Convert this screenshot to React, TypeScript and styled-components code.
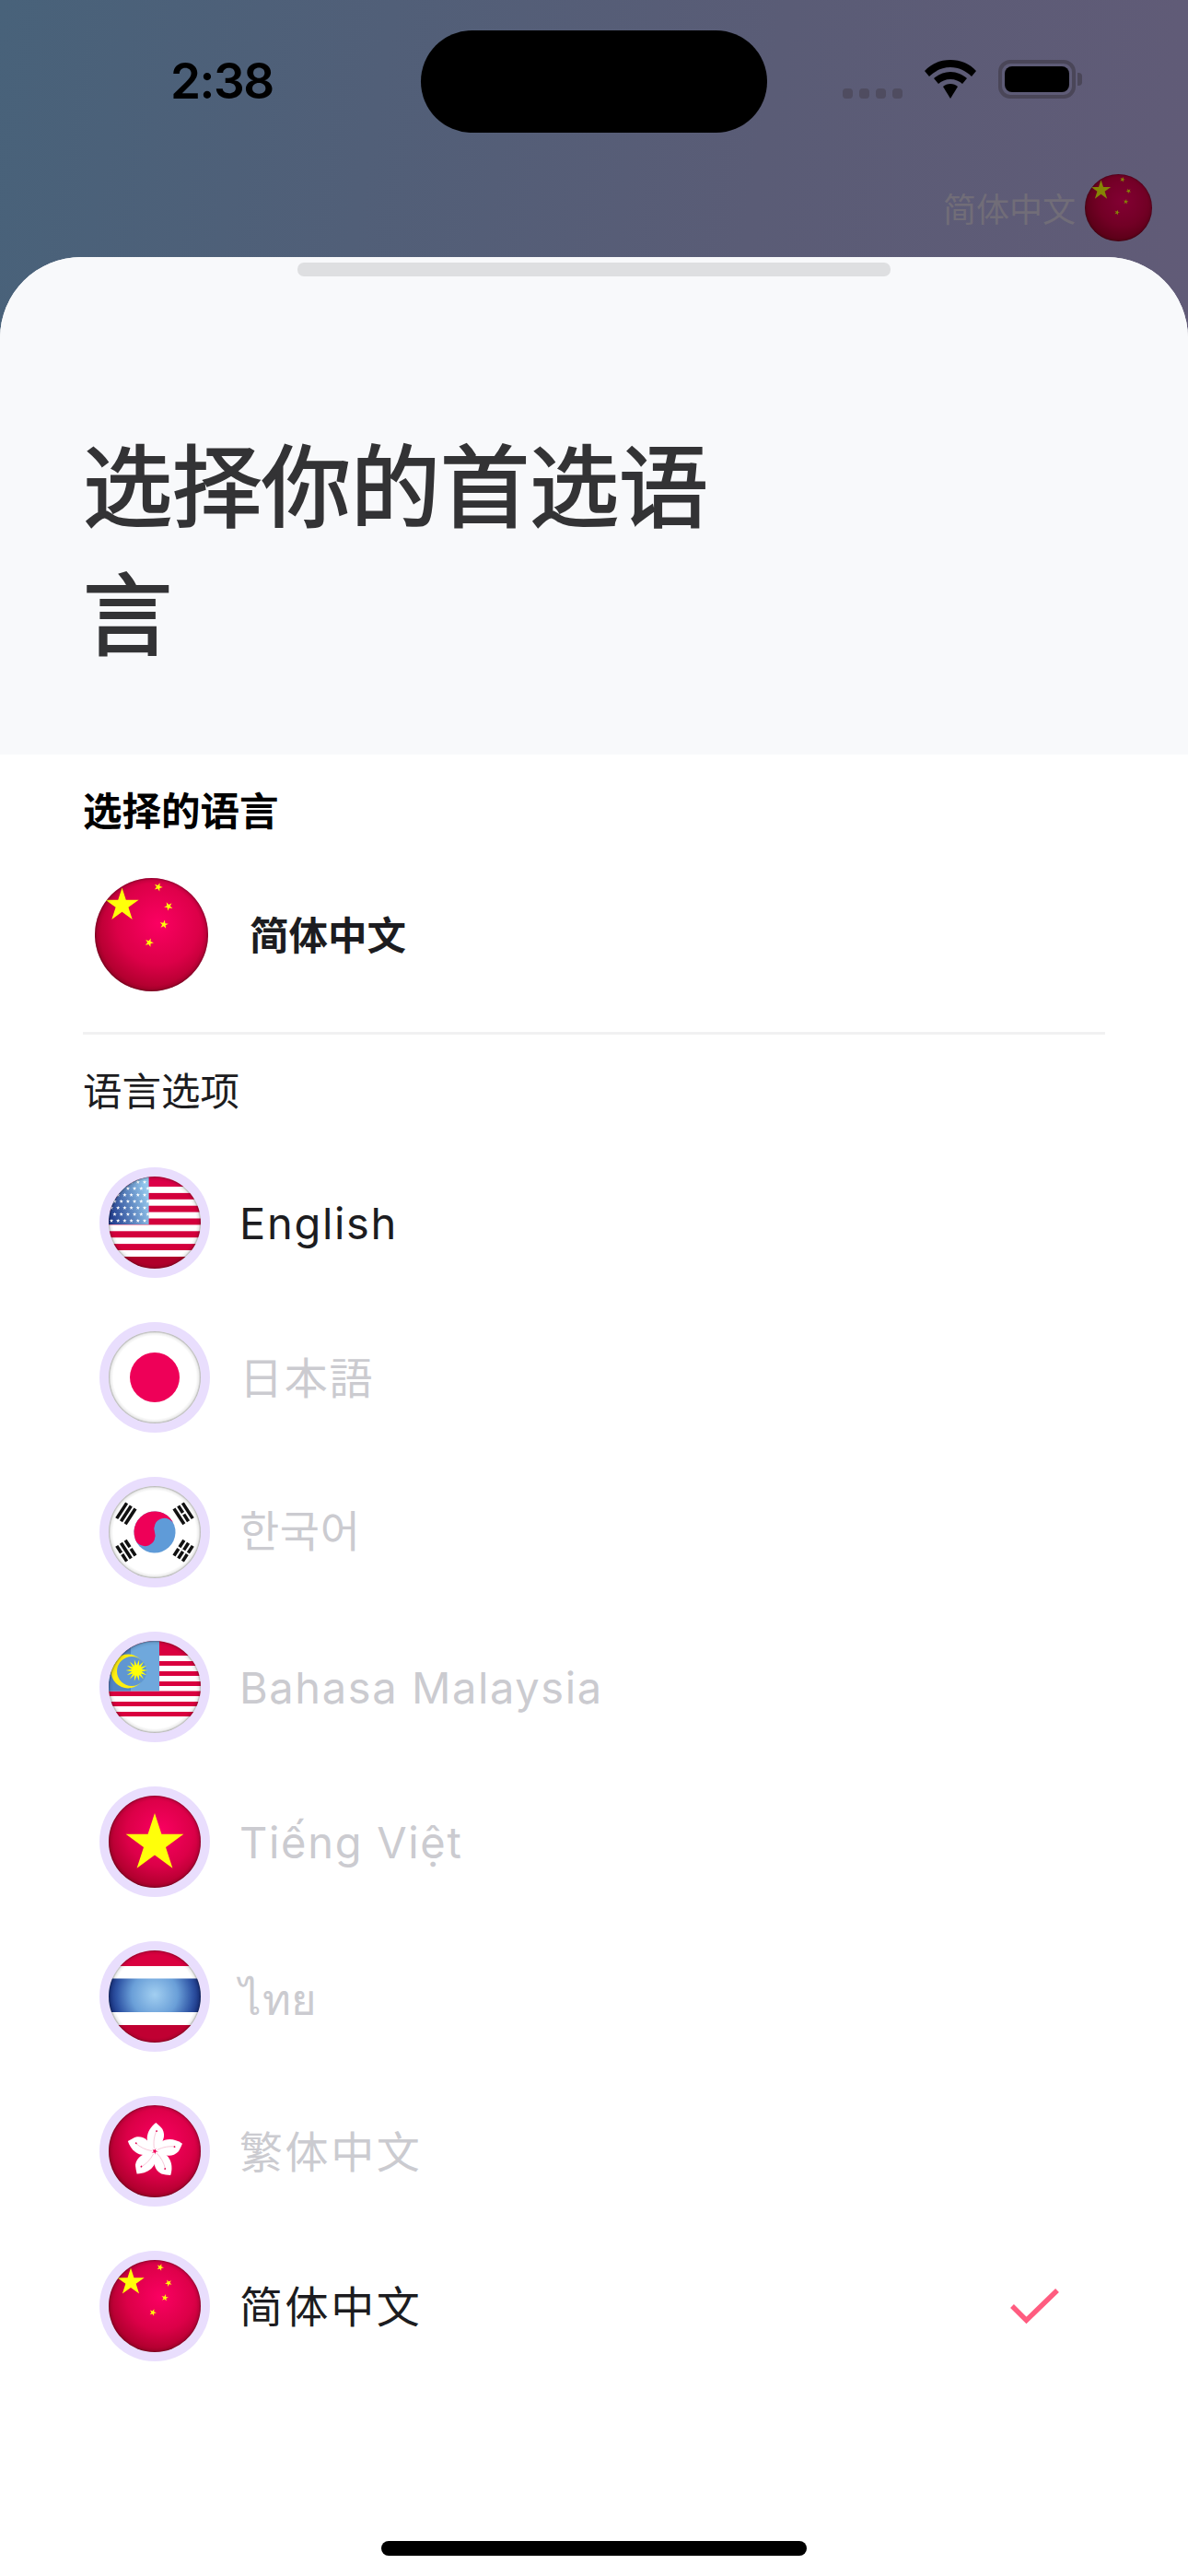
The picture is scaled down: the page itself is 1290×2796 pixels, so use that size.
import { useId, type ReactNode } from 'react'
import styled, { createGlobalStyle } from 'styled-components'

const GlobalStyle = createGlobalStyle`
  html, body {
    margin: 0;
    padding: 0;
    background: #fff;
  }
  * {
    box-sizing: border-box;
  }
`

const CJK = `"Noto Sans CJK SC", "Noto Sans", sans-serif`

const Page = styled.div`
  width: 1290px;
  height: 2796px;
  overflow: hidden;
  display: flex;
  flex-direction: column;
  background: linear-gradient(100deg, #48627a 0%, #5a5c76 48%, #675a78 100%);
  font-family: "Inter", ${CJK};
`

const StatusBar = styled.div`
  position: relative;
  height: 150px;
  display: flex;
  align-items: flex-start;
  padding: 65px 122px 0 185px;
`

const Time = styled.div`
  font-family: "Inter", sans-serif;
  font-size: 53px;
  line-height: 46px;
  font-weight: 600;
  letter-spacing: -1.5px;
  color: #000;
`

const Island = styled.div`
  position: absolute;
  left: 457px;
  top: 33px;
  width: 376px;
  height: 111px;
  border-radius: 56px;
  background: #000;
`

const StatusIcons = styled.div`
  margin-left: auto;
  height: 42px;
  display: flex;
  align-items: flex-end;
`

const SignalDots = styled.div`
  display: flex;
  gap: 7px;
  margin-right: 23px;
`

const SignalDot = styled.span`
  width: 11px;
  height: 11px;
  border-radius: 4px;
  background: #4f4c60;
`

const Battery = styled.div`
  width: 84px;
  height: 42px;
  margin-left: 23px;
  border: 4px solid #4a4658;
  border-radius: 13px;
  padding: 3px 3px;
  position: relative;
`

const BatteryFill = styled.div`
  width: 100%;
  height: 100%;
  background: #000;
  border-radius: 8px;
`

const BatteryCap = styled.div`
  position: absolute;
  right: -11px;
  top: 10px;
  width: 5px;
  height: 14px;
  border-radius: 0 4px 4px 0;
  background: #4a4658;
`

const TopLang = styled.div`
  margin-top: 38px;
  height: 74px;
  padding-right: 39px;
  display: flex;
  align-items: center;
  justify-content: flex-end;
  gap: 10px;
`

const TopLangText = styled.span`
  font-family: ${CJK};
  font-size: 36px;
  color: #716d78;
`

const TopFlag = styled.div`
  width: 73px;
  height: 73px;
  filter: brightness(0.52);
`

const Sheet = styled.div`
  margin-top: 17px;
  flex: 1;
  display: flex;
  flex-direction: column;
  border-radius: 88px 88px 0 0;
  overflow: hidden;
  background: #fff;
`

const SheetHeader = styled.div`
  height: 540px;
  padding: 6px 90px 0;
  background: #f8f9fb;
`

const Handle = styled.div`
  width: 644px;
  height: 15px;
  margin: 0 auto;
  border-radius: 7px;
  background: #dedfe1;
`

const Title = styled.h1`
  margin: 152px 0 0;
  width: 700px;
  font-family: ${CJK};
  font-size: 97px;
  line-height: 139px;
  font-weight: 400;
  -webkit-text-stroke: 2px #333335;
  color: #333335;
`

const Body = styled.div`
  flex: 1;
  display: flex;
  flex-direction: column;
  padding: 0 90px;
`

const SelectedLabel = styled.div`
  margin-top: 31px;
  font-family: ${CJK};
  font-size: 42.5px;
  line-height: 56px;
  font-weight: 700;
  color: #000;
`

const SelectedRow = styled.div`
  margin-top: 47px;
  display: flex;
  align-items: center;
  padding-left: 13px;
  gap: 45px;
`

const SelectedFlag = styled.div`
  width: 123px;
  height: 123px;
`

const SelectedName = styled.div`
  margin-bottom: 4px;
  font-family: ${CJK};
  font-size: 42.5px;
  font-weight: 700;
  color: #1c1c20;
`

const Divider = styled.div`
  margin-top: 44px;
  height: 3px;
  background: #f1f1f2;
`

const SectionLabel = styled.div`
  margin-top: 31px;
  font-family: ${CJK};
  font-size: 42.5px;
  line-height: 56px;
  font-weight: 400;
  color: #1c1c20;
`

const List = styled.div`
  margin-top: 33px;
  display: flex;
  flex-direction: column;
`

const Row = styled.div`
  height: 168px;
  display: flex;
  align-items: center;
  padding-left: 18px;
`

const Ring = styled.div`
  width: 120px;
  height: 120px;
  flex: none;
  display: flex;
  align-items: center;
  justify-content: center;
  border-radius: 50%;
  background: #e9defd;
`

const RingFlag = styled.div`
  width: 100px;
  height: 100px;
  border-radius: 50%;
  background: #fff;
`

const RowName = styled.span<{ $active: boolean; $lift: number; $spacing: number }>`
  margin-left: 32px;
  margin-bottom: ${p => p.$lift}px;
  font-family: "Inter", ${CJK};
  font-size: 47px;
  font-weight: 400;
  letter-spacing: ${p => p.$spacing}px;
  color: ${p => (p.$active ? '#1c1c20' : '#cbcbd0')};
`

const Check = styled.svg`
  margin-left: auto;
  margin-right: 49px;
  width: 54px;
  height: 40px;
`

const HomeIndicator = styled.div`
  width: 462px;
  height: 16px;
  margin: auto auto 22px;
  border-radius: 8px;
  background: #000;
`

function starPoints(cx: number, cy: number, r: number, rot = 0) {
  const pts: string[] = []
  for (let i = 0; i < 10; i++) {
    const rad = i % 2 === 0 ? r : r * 0.382
    const a = ((-90 + rot + i * 36) * Math.PI) / 180
    pts.push(`${(cx + rad * Math.cos(a)).toFixed(2)},${(cy + rad * Math.sin(a)).toFixed(2)}`)
  }
  return pts.join(' ')
}

const Globe = ({ children, base }: { children?: ReactNode; base: 'red' | 'white' }) => {
  const id = useId().replace(/[^a-zA-Z0-9]/g, '')
  const fill = base === 'red' ? `url(#${id}red)` : '#fff'
  return (
    <svg width="100%" height="100%" viewBox="0 0 100 100" style={{ display: 'block' }}>
      <defs>
        <clipPath id={`${id}c`}>
          <circle cx="50" cy="50" r="50" />
        </clipPath>
        <radialGradient id={`${id}red`} cx="56%" cy="40%" r="66%">
          <stop offset="0%" stopColor="#fb0062" />
          <stop offset="55%" stopColor="#dc0048" />
          <stop offset="100%" stopColor="#a00024" />
        </radialGradient>
        <radialGradient id={`${id}shade`} cx="50%" cy="50%" r="50%">
          <stop offset="90%" stopColor="#000" stopOpacity="0" />
          <stop offset="96%" stopColor="#000" stopOpacity="0.07" />
          <stop offset="100%" stopColor="#000" stopOpacity="0.32" />
        </radialGradient>
      </defs>
      <g clipPath={`url(#${id}c)`}>
        <rect width="100" height="100" fill={fill} />
        {children}
        <rect width="100" height="100" fill={`url(#${id}shade)`} />
      </g>
    </svg>
  )
}

const CnFlag = () => (
  <Globe base="red">
    <polygon points={starPoints(24, 24, 15.5)} fill="#ffff0a" />
    <polygon points={starPoints(56, 8, 4, 20)} fill="#ffff0a" />
    <polygon points={starPoints(65, 25, 4, 45)} fill="#ffff0a" />
    <polygon points={starPoints(61, 41, 4, 10)} fill="#ffff0a" />
    <polygon points={starPoints(48, 57, 4, 20)} fill="#ffff0a" />
  </Globe>
)

const UsFlag = () => {
  const stripes = [11, 24.8, 38.6, 52.4, 66.2]
  const stars: ReactNode[] = []
  for (let r = 0; r < 7; r++) {
    for (let c = 0; c < 6; c++) {
      stars.push(<polygon key={`${r}-${c}`} points={starPoints(3 + c * 7.2 + (r % 2) * 3.5, 6 + r * 7, 2.3)} fill="#fff" />)
    }
  }
  return (
    <Globe base="white">
      <defs>
        <linearGradient id="usBlue" x1="1" y1="0.5" x2="0" y2="0.8">
          <stop offset="0%" stopColor="#93c6ec" />
          <stop offset="100%" stopColor="#1e3a8c" />
        </linearGradient>
      </defs>
      <rect width="100" height="11" fill="#dc0048" />
      {stripes.map(y => (
        <rect key={y} y={y + 6.9} width="100" height="6.9" fill="#d3003c" />
      ))}
      <rect y="87" width="100" height="13" fill="#b0002a" />
      <rect width="43.6" height="52" fill="url(#usBlue)" />
      {stars}
    </Globe>
  )
}

const JpFlag = () => (
  <Globe base="white">
    <circle cx="50" cy="50" r="27" fill="#ee0058" />
  </Globe>
)

const Trigram = ({ angle, broken }: { angle: number; broken: number[] }) => (
  <g transform={`rotate(${angle} 50 50)`}>
    {[0, 1, 2].map(i => {
      const y = 5.5 + i * 5.6
      return broken.includes(i) ? (
        <g key={i}>
          <rect x="40" y={y} width="9" height="3.6" fill="#111" />
          <rect x="51" y={y} width="9" height="3.6" fill="#111" />
        </g>
      ) : (
        <rect key={i} x="40" y={y} width="20" height="3.6" fill="#111" />
      )
    })}
  </g>
)

const KrFlag = () => (
  <Globe base="white">
    <Trigram angle={-57} broken={[]} />
    <Trigram angle={57} broken={[1]} />
    <Trigram angle={123} broken={[0, 1, 2]} />
    <Trigram angle={237} broken={[0, 2]} />
    <g transform="rotate(-20 50 50)">
      <circle cx="50" cy="50" r="22.5" fill="#5f9bd8" />
      <path d="M27.5 50 A22.5 22.5 0 0 1 72.5 50 A11.25 11.25 0 0 0 50 50 A11.25 11.25 0 0 1 27.5 50 Z" fill="#ee0058" />
    </g>
  </Globe>
)

const MyFlag = () => {
  const reds = [[0, 16], [22, 27], [33, 38], [44, 49], [54.5, 60], [66, 71], [77, 82]]
  return (
    <Globe base="white">
      {reds.map(([a, b]) => (
        <rect key={a} y={a} width="100" height={b - a} fill="#d9003f" />
      ))}
      <rect width="55" height="54.5" fill="#6fa8dc" />
      <rect width="24" height="54.5" fill="#3a66b0" opacity="0.55" />
      <circle cx="21" cy="33" r="18.5" fill="#ffee10" />
      <circle cx="25" cy="33" r="16" fill="#5f96d2" />
      <polygon
        points={Array.from({ length: 28 }, (_, i) => {
          const rad = i % 2 === 0 ? 12 : 5.5
          const a = (i * 360) / 28 * (Math.PI / 180)
          return `${(30.5 + rad * Math.cos(a)).toFixed(2)},${(32 + rad * Math.sin(a)).toFixed(2)}`
        }).join(' ')}
        fill="#ffff0a"
      />
    </Globe>
  )
}

const VnFlag = () => (
  <Globe base="red">
    <polygon points={starPoints(50, 52, 33)} fill="#ffff0a" />
  </Globe>
)

const ThFlag = () => (
  <Globe base="white">
    <defs>
      <radialGradient id="thBlue" gradientUnits="userSpaceOnUse" cx="50" cy="48" r="50">
        <stop offset="0%" stopColor="#a2cff1" />
        <stop offset="50%" stopColor="#6a9fd8" />
        <stop offset="82%" stopColor="#3056a6" />
        <stop offset="100%" stopColor="#17307f" />
      </radialGradient>
    </defs>
    <rect width="100" height="17" fill="#d9003f" />
    <rect y="30.5" width="100" height="36.5" fill="url(#thBlue)" />
    <rect y="81" width="100" height="19" fill="#c00032" />
  </Globe>
)

const HkFlag = () => (
  <Globe base="red">
    {[0, 72, 144, 216, 288].map(a => (
      <g key={a} transform={`translate(50 50) rotate(${a + 8})`}>
        <path d="M-1 -1 C-12 -6 -14 -20 -3 -31 C0 -29 3 -27 5 -25 C10 -18 8 -9 -1 -1 Z" fill="#fff" />
        <path d="M-1 -3 C-3 -10 -3 -16 -1 -23" fill="none" stroke="#f4b6cc" strokeWidth="0.7" />
        <circle cx="-1" cy="-22" r="0.9" fill="#e0004e" />
      </g>
    ))}
  </Globe>
)

const languages = [
  { name: 'English', Flag: UsFlag, active: true, lang: 'en', lift: 0, spacing: 1.7 },
  { name: '日本語', Flag: JpFlag, active: false, lang: 'ja', lift: 6, spacing: 1.7 },
  { name: '한국어', Flag: KrFlag, active: false, lang: 'ko', lift: 10, spacing: 0.6 },
  { name: 'Bahasa Malaysia', Flag: MyFlag, active: false, lang: 'ms', lift: 0, spacing: 1.6 },
  { name: 'Tiếng Việt', Flag: VnFlag, active: false, lang: 'vi', lift: 0, spacing: 1.7 },
  { name: 'ไทย', Flag: ThFlag, active: false, lang: 'th', lift: -6, spacing: 0.6 },
  { name: '繁体中文', Flag: HkFlag, active: false, lang: 'zh-Hant', lift: 6, spacing: 2.6 },
  { name: '简体中文', Flag: CnFlag, active: true, lang: 'zh-Hans', lift: 6, spacing: 2.6, selected: true },
]

const App = () => {
  return (
    <Page>
      <GlobalStyle />
      <StatusBar>
        <Time>2:38</Time>
        <Island />
        <StatusIcons>
          <SignalDots>
            <SignalDot />
            <SignalDot />
            <SignalDot />
            <SignalDot />
          </SignalDots>
          <svg width="58" height="42" viewBox="0 0 58 42">
            <path d="M29 0C18 0 8 4 1 12l5 6c6-6 14-10 23-10s17 4 23 10l5-6C50 4 40 0 29 0Z" fill="#000" />
            <path d="M29 13c-7 0-13 3-18 7l5 6c3-3 8-5 13-5s10 2 13 5l5-6c-5-4-11-7-18-7Z" fill="#000" />
            <path d="M29 26c-3 0-6 1-8 3l8 13 8-13c-2-2-5-3-8-3Z" fill="#000" />
          </svg>
          <Battery>
            <BatteryFill />
            <BatteryCap />
          </Battery>
        </StatusIcons>
      </StatusBar>
      <TopLang>
        <TopLangText>简体中文</TopLangText>
        <TopFlag>
          <CnFlag />
        </TopFlag>
      </TopLang>
      <Sheet>
        <SheetHeader>
          <Handle />
          <Title>选择你的首选语言</Title>
        </SheetHeader>
        <Body>
          <SelectedLabel>选择的语言</SelectedLabel>
          <SelectedRow>
            <SelectedFlag>
              <CnFlag />
            </SelectedFlag>
            <SelectedName>简体中文</SelectedName>
          </SelectedRow>
          <Divider />
          <SectionLabel>语言选项</SectionLabel>
          <List>
            {languages.map(({ name, Flag, active, lang, lift, spacing, selected }) => (
              <Row key={name}>
                <Ring>
                  <RingFlag>
                    <Flag />
                  </RingFlag>
                </Ring>
                <RowName $active={active} $lift={lift} $spacing={spacing} lang={lang}>
                  {name}
                </RowName>
                {selected && (
                  <Check viewBox="0 0 54 40">
                    <path d="M2 20 L17.5 35.5 L51 3" fill="none" stroke="#ff5c80" strokeWidth="5.5" />
                  </Check>
                )}
              </Row>
            ))}
          </List>
          <HomeIndicator />
        </Body>
      </Sheet>
    </Page>
  )
}

export default App
